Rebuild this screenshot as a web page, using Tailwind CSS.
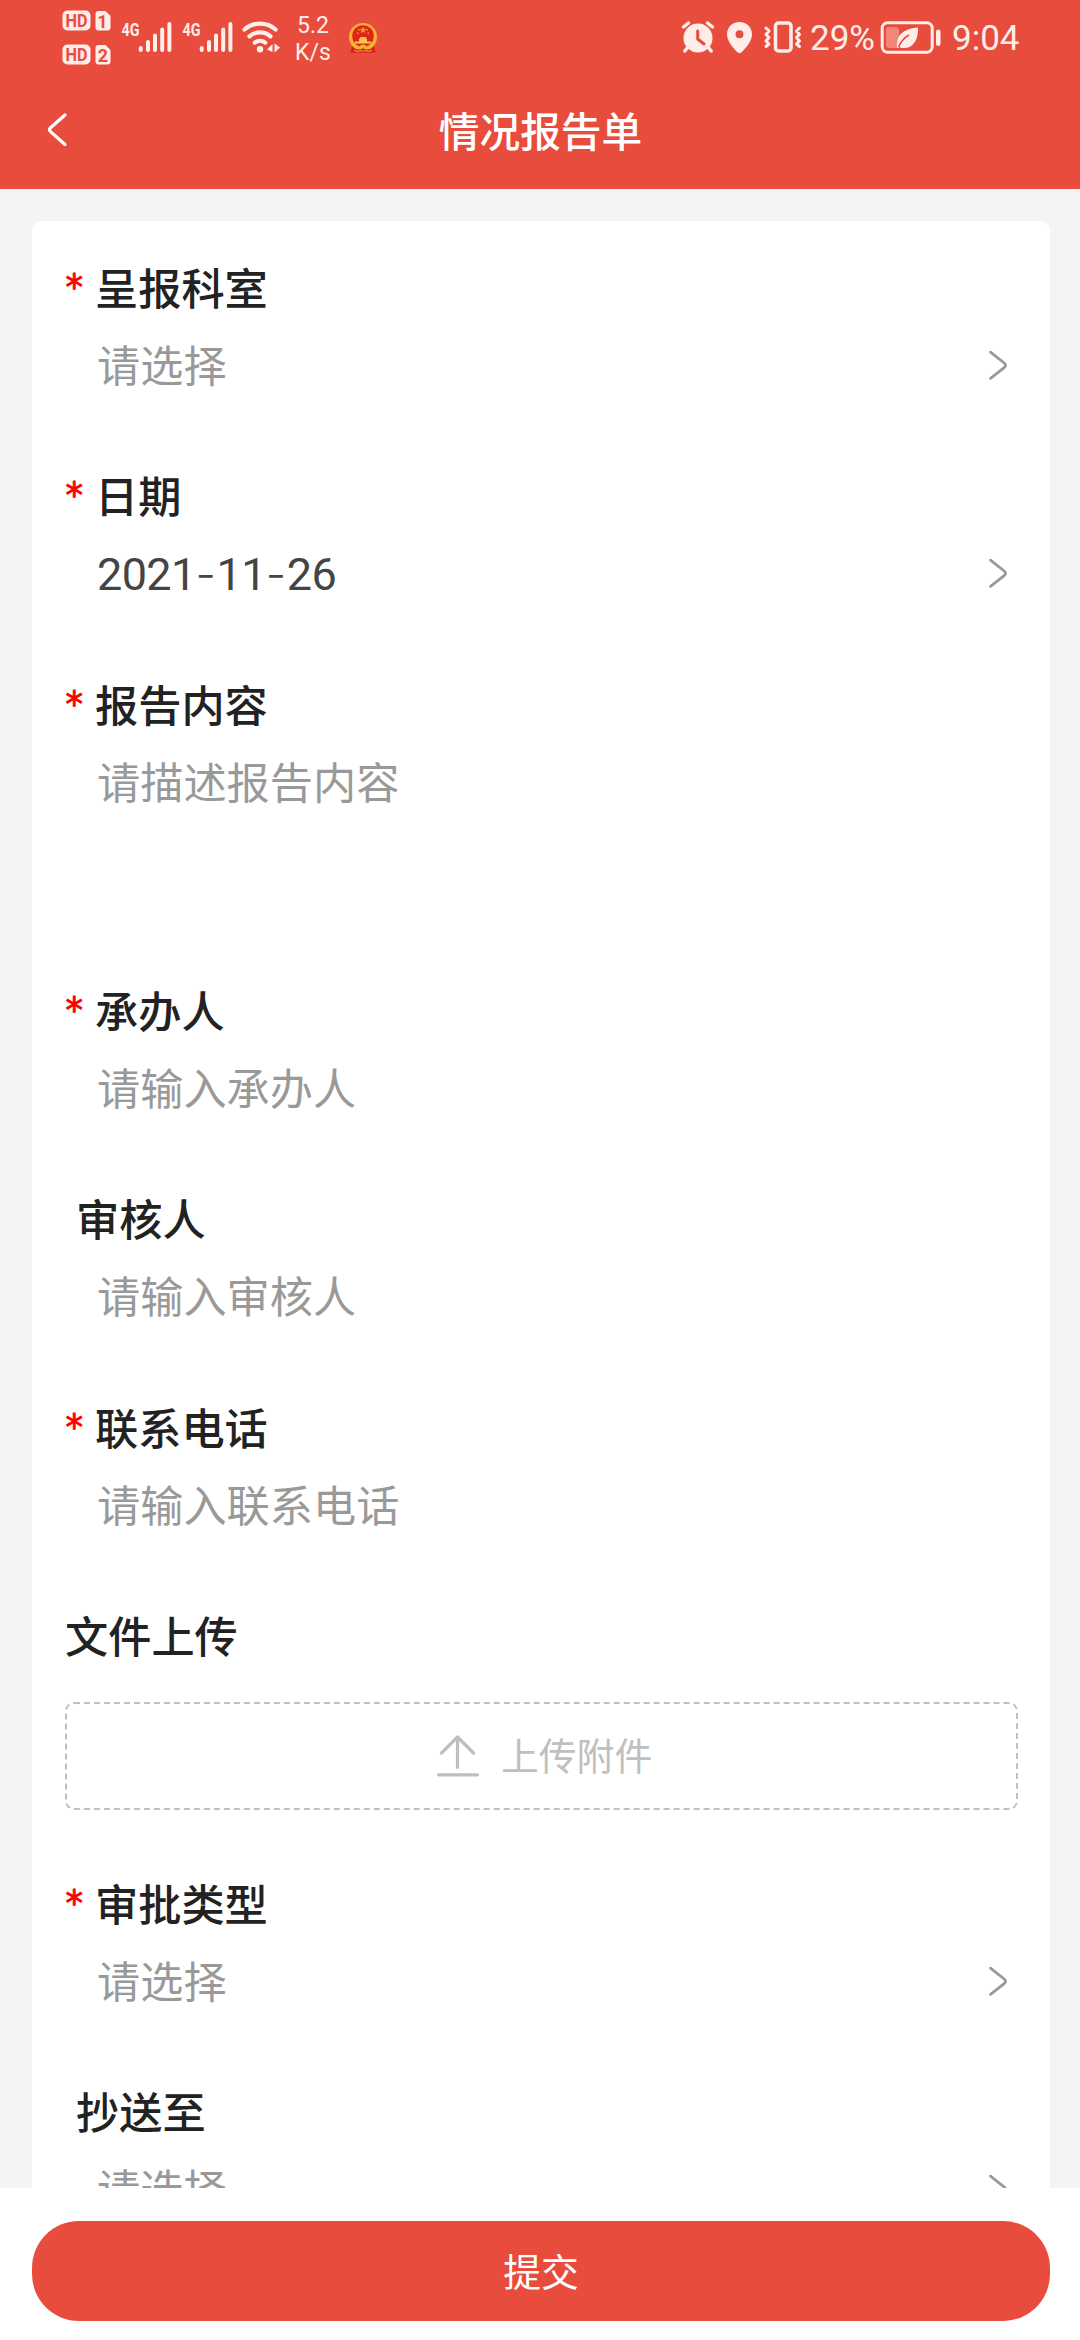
<!DOCTYPE html>
<html lang="zh-CN">
<head>
<meta charset="utf-8">
<title>情况报告单</title>
<script src="https://cdn.jsdelivr.net/npm/@tailwindcss/browser@4"></script>
</head>
<body class="w-[1080px] h-[2340px] overflow-hidden flex flex-col bg-[#f4f4f4] font-['Noto_Sans_CJK_SC',sans-serif]">

<header class="h-[189px] shrink-0 bg-[#e84c3d] flex flex-col">
  <!-- status bar -->
  <div class="h-[75px] flex items-start text-[#ffedea] font-['Roboto',sans-serif]">
    <svg class="ml-[62px] shrink-0" width="50" height="75" viewBox="62 0 50 75" fill="#ffedea">
      <rect x="62.5" y="10.5" width="28" height="20" rx="5"/>
      <path d="M98.500 11h7l5 5v11.500a3 3 0 0 1-3 3h-9a3 3 0 0 1-3-3v-13.500a3 3 0 0 1 3-3z"/>
      <rect x="62.500" y="44.500" width="28" height="20" rx="5"/>
      <path d="M98.500 45h7l5 5v11.500a3 3 0 0 1-3 3h-9a3 3 0 0 1-3-3v-13.500a3 3 0 0 1 3-3z"/>
      <g fill="#e84c3d" font-family="Roboto" font-weight="700" font-size="18" text-anchor="middle">
        <text x="76.500" y="27" textLength="22" lengthAdjust="spacingAndGlyphs">HD</text><text x="102.500" y="27.500">1</text>
        <text x="76.500" y="61" textLength="22" lengthAdjust="spacingAndGlyphs">HD</text><text x="102.800" y="61.500">2</text>
      </g>
    </svg>
    <svg class="ml-[9px] shrink-0" width="52" height="75" viewBox="121 0 52 75" fill="none" stroke="#ffedea" stroke-width="4" stroke-linecap="round">
      <text x="121.500" y="36" font-family="Roboto" font-weight="700" font-size="19" textLength="18" lengthAdjust="spacingAndGlyphs" fill="#ffedea" stroke="none">4G</text>
      <path d="M140.700 48v2M148 42v8M155 35.500v14.500M162.200 29.500v20.500M169.400 24v26"/>
    </svg>
    <svg class="ml-[9px] shrink-0" width="52" height="75" viewBox="121 0 52 75" fill="none" stroke="#ffedea" stroke-width="4" stroke-linecap="round">
      <text x="121.500" y="36" font-family="Roboto" font-weight="700" font-size="19" textLength="18" lengthAdjust="spacingAndGlyphs" fill="#ffedea" stroke="none">4G</text>
      <path d="M140.700 48v2M148 42v8M155 35.500v14.500M162.200 29.500v20.500M169.400 24v26"/>
    </svg>
    <svg class="ml-[8px] shrink-0" width="40" height="75" viewBox="242 0 40 75" fill="none" stroke="#ffedea" stroke-width="4.200" stroke-linecap="round">
      <path d="M244.500 29.500a23.500 23.500 0 0 1 31 0M249.500 36.300a16 16 0 0 1 21 0M254.800 42.600a8.500 8.500 0 0 1 10.400 0"/>
      <circle cx="260" cy="49.200" r="3.200" fill="#ffedea" stroke="none"/>
      <path d="M267 49.500l5.500-5.500v8zM280 47.500l-5.500-4v9z" fill="#ffedea" stroke="none"/>
    </svg>
    <div class="w-[36px] ml-[13px] pt-[12px] text-[23px] leading-[27px] text-center shrink-0"><div>5.2</div><div>K/s</div></div>
    <svg class="ml-[17px] shrink-0" width="30" height="75" viewBox="348 0 30 75">
      <path d="M352 46h22l1.500 6.500h-25z" fill="#d41f1a"/>
      <circle cx="363" cy="37" r="14" fill="#f3b233"/>
      <circle cx="363" cy="36" r="10.800" fill="#df2418"/>
      <path d="M363 26.500l1.100 2.200 2.400.2-1.800 1.700.5 2.400-2.200-1.200-2.200 1.200.5-2.400-1.800-1.700 2.400-.2zM358 29h1.500v1.500h-1.500zM366.500 29h1.500v1.500h-1.500zM357 32.500h1.500v1.500h-1.500zM367.500 32.500h1.500v1.500h-1.500z" fill="#e89a2c"/>
      <path d="M359 39l1.500-2h5l1.500 2v2.500h4v2h-16v-2h4z" fill="#f7c64a"/>
      <circle cx="363" cy="48" r="3.500" fill="#f3b233"/>
      <path d="M352 47q5.500 4.500 11 1.200q5.500 3.300 11-1.200l-1.500 5.500h-5l-1-2h-7l-1 2h-5z" fill="#d41f1a"/>
      <path d="M354 50.500q4 1.800 7 0M372 50.500q-4 1.800-7 0" stroke="#f3b233" fill="none"/>
    </svg>

    <svg class="ml-auto shrink-0" width="34" height="75" viewBox="681 0 34 75">
      <path d="M683.500 27l5-4M712.500 27l-5-4M688 47l-3.200 4M708 47l3.200 4" stroke="#ffedea" stroke-width="3.500" stroke-linecap="round"/>
      <circle cx="698" cy="38" r="14.500" fill="#ffedea"/>
      <path d="M697.700 31v8l6.300 5" stroke="#e84c3d" stroke-width="3" fill="none" stroke-linecap="round" stroke-linejoin="round"/>
    </svg>
    <svg class="ml-[11px] shrink-0" width="28" height="75" viewBox="726 0 28 75">
      <path fill="#ffedea" fill-rule="evenodd" d="M739.500 22c7.200 0 12.500 5.300 12.500 12.300 0 6-4.500 12-10 17.700q-2.500 2.300-5 0c-5.500-5.700-10-11.700-10-17.700 0-7 5.300-12.300 12.500-12.300zM739.500 30.200a4 4 0 1 0 0 8 4 4 0 0 0 0-8z"/>
    </svg>
    <svg class="ml-[9px] shrink-0" width="40" height="75" viewBox="763 0 40 75" fill="none" stroke="#ffedea" stroke-linecap="round" stroke-linejoin="round">
      <rect x="775.500" y="23" width="15.500" height="28" rx="3" stroke-width="3.500"/>
      <path d="M766 28l3 3-3 3.500 3 3-3 3.500 3 3-3 2.500M799.500 28l-3 3 3 3.500-3 3 3 3.500-3 3 3 2.500" stroke-width="3"/>
    </svg>
    <span class="ml-[7px] pt-[18px] w-[66px] text-[35px] leading-[42px] shrink-0">29%</span>
    <svg class="ml-[4px] shrink-0" width="62" height="75" viewBox="880 0 62 75">
      <rect x="882.200" y="22.700" width="50" height="29.500" rx="5.500" fill="none" stroke="#ffedea" stroke-width="3"/>
      <rect x="886" y="27" width="13" height="21" rx="3" fill="#f38679"/>
      <path d="M897 47.500c-.5-12 5-18.500 21-20 .5 12-4.500 21.500-15.500 20.500q-2 0-3.200-1.200l-1 1.500z" fill="#ffedea"/>
      <path d="M898.500 47q3.500-8 10.500-12" stroke="#e84c3d" stroke-width="1.500" fill="none"/>
      <rect x="936" y="29.500" width="4.500" height="16.500" rx="2.200" fill="#ffedea"/>
    </svg>
    <span class="ml-[10px] pt-[18px] mr-[60px] w-[68px] text-[35px] leading-[42px] shrink-0">9:04</span>
  </div>
  <!-- title bar -->
  <div class="h-[114px] flex items-start">
    <svg class="ml-[43px] mt-[35px]" width="28" height="40" viewBox="0 0 28 40" fill="none" stroke="#fff" stroke-width="3.200" stroke-linecap="round"><path d="M22 5L7.500 17.700q-2 2 0 4L22 34.500"/></svg>
    <h1 class="flex-1 pr-[70px] text-center text-[40.7px] leading-[110px] font-medium text-white">情况报告单</h1>
  </div>
</header>

<main class="h-[1999px] shrink-0 overflow-hidden px-[32px] pr-[30px] pt-[32px]">
  <div class="bg-white rounded-[10px] pt-[32px] pl-[33px] pr-[32px] h-[2100px] text-[43.2px] text-[#999]">

    <section class="h-[208.4px]">
      <div class="h-[72px] flex items-start text-[#222] font-medium leading-[67px]"><span class="w-[30px] pl-[0.5px] leading-[68px] text-[35px] font-['DejaVu_Sans'] font-normal text-[#f00] [-webkit-text-stroke:0.9px_#f00]">*</span><span>呈报科室</span></div>
      <div class="h-[80px] flex items-start justify-between pl-[32px] pr-[10px] leading-[76px]"><span>请选择</span>
        <svg class="mt-[25px]" width="20" height="32" viewBox="0 0 20 32" fill="none" stroke="#999" stroke-width="2.800" stroke-linecap="round"><path d="M2.500 2.200L16.200 13Q18.800 15.300 16.200 17.600L2.500 28.400"/></svg></div>
    </section>

    <section class="h-[208.4px]">
      <div class="h-[72px] flex items-start text-[#222] font-medium leading-[67px]"><span class="w-[30px] pl-[0.5px] leading-[68px] text-[35px] font-['DejaVu_Sans'] font-normal text-[#f00] [-webkit-text-stroke:0.9px_#f00]">*</span><span>日期</span></div>
      <div class="h-[80px] flex items-start justify-between pl-[32px] pr-[10px]"><span class="leading-[82px] font-['Roboto'] text-[45px] tracking-[-0.65px] text-[#444]">2021<span class="font-['Inter'] font-light tracking-[0.6px]">-</span>11<span class="font-['Inter'] font-light tracking-[0.6px]">-</span>26</span>
        <svg class="mt-[25px]" width="20" height="32" viewBox="0 0 20 32" fill="none" stroke="#999" stroke-width="2.800" stroke-linecap="round"><path d="M2.500 2.200L16.200 13Q18.800 15.300 16.200 17.600L2.500 28.400"/></svg></div>
    </section>

    <section class="h-[306px]">
      <div class="h-[72px] flex items-start text-[#222] font-medium leading-[67px]"><span class="w-[30px] pl-[0.5px] leading-[68px] text-[35px] font-['DejaVu_Sans'] font-normal text-[#f00] [-webkit-text-stroke:0.9px_#f00]">*</span><span>报告内容</span></div>
      <div class="h-[80px] pl-[32px] leading-[76px]">请描述报告内容</div>
    </section>

    <section class="h-[208.4px]">
      <div class="h-[72px] flex items-start text-[#222] font-medium leading-[67px]"><span class="w-[30px] pl-[0.5px] leading-[68px] text-[35px] font-['DejaVu_Sans'] font-normal text-[#f00] [-webkit-text-stroke:0.9px_#f00]">*</span><span>承办人</span></div>
      <div class="h-[80px] pl-[32px] leading-[76px]">请输入承办人</div>
    </section>

    <section class="h-[208.4px]">
      <div class="h-[72px] pl-[11px] leading-[67px] text-[#222] font-medium">审核人</div>
      <div class="h-[80px] pl-[32px] leading-[76px]">请输入审核人</div>
    </section>

    <section class="h-[208.4px]">
      <div class="h-[72px] flex items-start text-[#222] font-medium leading-[67px]"><span class="w-[30px] pl-[0.5px] leading-[68px] text-[35px] font-['DejaVu_Sans'] font-normal text-[#f00] [-webkit-text-stroke:0.9px_#f00]">*</span><span>联系电话</span></div>
      <div class="h-[80px] pl-[32px] leading-[76px]">请输入联系电话</div>
    </section>

    <section class="h-[268px]">
      <div class="h-[72px] leading-[67px] text-[#222] font-medium">文件上传</div>
      <div class="mt-[29px] h-[108px] w-[953px] rounded-[9px] border-2 border-dashed border-[#bfbfbf] flex items-center text-[37.8px] text-[#bfbfbf]">
        <svg class="ml-[369px]" width="44" height="44" viewBox="0 0 44 44" fill="none" stroke="#bfbfbf" stroke-width="3.200" stroke-linecap="round" stroke-linejoin="round"><path d="M21.500 33.500V3M5.500 19L21.500 3L37.500 19M2.500 40.800H41.500"/></svg>
        <span class="ml-[21px] pb-[4px] leading-[60px]">上传附件</span>
      </div>
    </section>

    <section class="h-[208.4px]">
      <div class="h-[72px] flex items-start text-[#222] font-medium leading-[67px]"><span class="w-[30px] pl-[0.5px] leading-[68px] text-[35px] font-['DejaVu_Sans'] font-normal text-[#f00] [-webkit-text-stroke:0.9px_#f00]">*</span><span>审批类型</span></div>
      <div class="h-[80px] flex items-start justify-between pl-[32px] pr-[10px] leading-[76px]"><span>请选择</span>
        <svg class="mt-[25px]" width="20" height="32" viewBox="0 0 20 32" fill="none" stroke="#999" stroke-width="2.800" stroke-linecap="round"><path d="M2.500 2.200L16.200 13Q18.800 15.300 16.200 17.600L2.500 28.400"/></svg></div>
    </section>

    <section class="h-[208.4px]">
      <div class="h-[72px] pl-[11px] leading-[67px] text-[#222] font-medium">抄送至</div>
      <div class="h-[80px] flex items-start justify-between pl-[32px] pr-[10px] leading-[76px]"><span>请选择</span>
        <svg class="mt-[25px]" width="20" height="32" viewBox="0 0 20 32" fill="none" stroke="#999" stroke-width="2.800" stroke-linecap="round"><path d="M2.500 2.200L16.200 13Q18.800 15.300 16.200 17.600L2.500 28.400"/></svg></div>
    </section>
  </div>
</main>

<footer class="h-[152px] shrink-0 bg-white pt-[33px] pl-[32px] pr-[30px]">
  <button class="block w-full h-[100px] rounded-[47px] bg-[#e84c3d] text-white text-[37.8px] leading-[97px] pb-[3px] text-center">提交</button>
</footer>
</body>
</html>
